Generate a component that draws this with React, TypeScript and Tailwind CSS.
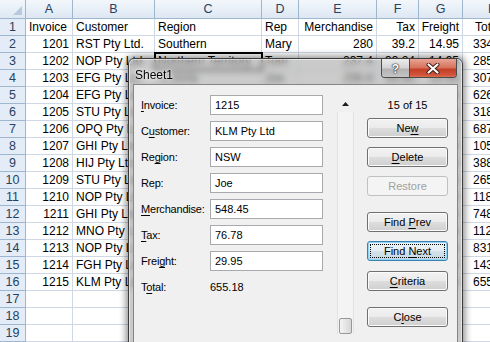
import React from "react";

const W = [
  "w-[26px]",
  "w-[47px]",
  "w-[82px]",
  "w-[107px]",
  "w-[37px]",
  "w-[78px]",
  "w-[42px]",
  "w-[44px]",
  "w-[60px]",
];
const LETTERS = ["", "A", "B", "C", "D", "E", "F", "G", "H"];

const DATA: string[][] = [
  ["Invoice", "Customer", "Region", "Rep", "Merchandise", "Tax", "Freight", "Total"],
  ["1201", "RST Pty Ltd.", "Southern", "Mary", "280", "39.2", "14.95", "334.15"],
  ["1202", "NOP Pty Ltd", "Northern Territory", "Tom", "237.4", "33.24", "14.95", "285.59"],
  ["1203", "EFG Pty Ltd", "Victoria", "Joe", "256.8", "35.95", "14.95", "307.70"],
  ["1204", "EFG Pty Ltd", "Victoria", "Joe", "536.3", "75.08", "29.95", "626.33"],
  ["1205", "STU Pty Ltd", "NSW", "Mary", "266.0", "37.24", "14.95", "318.19"],
  ["1206", "OPQ Pty Ltd", "Queensland", "Tom", "576.6", "80.72", "29.95", "687.27"],
  ["1207", "GHI Pty Ltd", "NSW", "Joe", "79.5", "11.13", "14.95", "105.58"],
  ["1208", "HIJ Pty Ltd", "Southern", "Mary", "327.7", "45.88", "14.95", "388.53"],
  ["1209", "STU Pty Ltd", "NSW", "Mary", "219.4", "30.72", "14.95", "265.07"],
  ["1210", "NOP Pty Ltd", "Queensland", "Tom", "90.8", "12.71", "14.95", "118.46"],
  ["1211", "GHI Pty Ltd", "NSW", "Joe", "630.1", "88.21", "29.95", "748.26"],
  ["1212", "MNO Pty Ltd", "Victoria", "Joe", "85.5", "11.97", "14.95", "112.42"],
  ["1213", "NOP Pty Ltd", "Queensland", "Tom", "703.2", "98.45", "29.95", "831.60"],
  ["1214", "FGH Pty Ltd", "Southern", "Mary", "112.6", "15.76", "14.95", "143.31"],
  ["1215", "KLM Pty Ltd", "NSW", "Joe", "548.45", "76.78", "29.95", "655.18"],
  ["", "", "", "", "", "", "", ""],
  ["", "", "", "", "", "", "", ""],
  ["", "", "", "", "", "", "", ""],
];

function alignFor(row: number, col: number): string {
  if (col === 1) return row === 0 ? "text-left pl-[3px]" : "text-right pr-[3px]";
  if (col === 8) return row === 0 ? "text-left pl-[12px]" : "text-left pl-[10px]";
  if (col >= 5) return "text-right pr-[3px]";
  return "text-left pl-[3px]";
}

function Sheet() {
  return (
    <div className="flex flex-col">
      {/* column headers */}
      <div className="flex h-[19px]">
        {LETTERS.map((l, i) => (
          <div
            key={i}
            className={`${W[i]} relative flex-none border-b border-r border-[#9eb6ce] bg-[linear-gradient(#f3f7fb,#dde7f3)] text-center text-[12.5px] leading-[18px] text-[#27415f]`}
          >
            {i === 0 ? (
              <svg className="absolute bottom-[3px] right-[3px]" width="9" height="9" viewBox="0 0 9 9">
                <path d="M9 0 L9 9 L0 9 Z" fill="#b8c9dd" />
              </svg>
            ) : (
              l
            )}
          </div>
        ))}
      </div>
      {DATA.map((row, r) => (
        <div key={r} className="flex h-[17px]">
          <div className="w-[26px] flex-none border-b border-r border-[#9eb6ce] bg-[#e4ecf7] text-center text-[12.5px] leading-[16px] text-[#27415f]">
            {r + 1}
          </div>
          {row.map((v, c) => (
            <div
              key={c}
              className={`${W[c + 1]} flex-none overflow-hidden whitespace-nowrap border-b border-r border-[#d0d7e5] text-[12px] leading-[16px] text-black ${alignFor(r, c + 1)}`}
            >
              {v}
            </div>
          ))}
        </div>
      ))}
    </div>
  );
}

function U({ children }: { children: React.ReactNode }) {
  return <span className="underline decoration-1 underline-offset-[2px]">{children}</span>;
}

function Field({ label, value }: { label: React.ReactNode; value?: string }) {
  return (
    <div className="flex h-[20px] items-center">
      <div className="w-[69px] flex-none text-[11px] leading-[14px] tracking-[-0.2px] text-black">{label}</div>
      {value !== undefined ? (
        <div className="h-[20px] w-[113px] flex-none border border-[#a7a9ad] bg-white pl-[4px] text-[11px] leading-[18px] text-black">
          {value}
        </div>
      ) : null}
    </div>
  );
}

function Btn({ children, top }: { children: React.ReactNode; top: string }) {
  return (
    <div
      className={`${top} h-[20px] w-[81px] rounded-[3px] border border-[#707070] bg-[linear-gradient(#f2f2f2_0%,#ebebeb_48%,#dddddd_52%,#cfcfcf_100%)] text-center text-[11px] leading-[18px] text-black shadow-[inset_0_0_0_1px_#fbfbfb]`}
    >
      {children}
    </div>
  );
}

function Dialog() {
  return (
    <div className="absolute left-[128px] top-[58px] h-[300px] w-[335px] rounded-t-[6px] border border-[#3c3c3c] bg-[rgba(165,165,165,0.58)] shadow-[0_0_7px_2px_rgba(0,0,0,0.45)] backdrop-blur-[3px]">
      <div className="pointer-events-none absolute inset-0 rounded-t-[5px] border border-[rgba(255,255,255,0.55)]" />
      {/* title bar */}
      <div className="relative flex h-[25px] items-start justify-between">
        <span className="ml-[6px] mt-[9px] text-[12px] leading-[14px] text-black [text-shadow:0_0_6px_#fff,0_0_3px_#fff]">
          Sheet1
        </span>
        <div className="mr-[5px] flex h-[19px] overflow-hidden rounded-b-[4px] border border-t-0 border-[#4a4a4a]">
          <div className="flex h-[19px] w-[28px] items-center justify-center border-r border-[#4a4a4a] bg-[linear-gradient(#ececec_0%,#d4d4d4_45%,#b4b4b4_55%,#c6c6c6_100%)]">
            <span className="text-[12px] font-bold leading-[12px] text-white [text-shadow:0_0_1px_#222,0_0_1px_#222,0_0_2px_#444]">
              ?
            </span>
          </div>
          <div className="flex h-[19px] w-[46px] items-center justify-center bg-[linear-gradient(#e8a597_0%,#d7725c_45%,#c43f28_55%,#d0553a_85%,#e08066_100%)]">
            <svg width="14" height="11" viewBox="0 0 14 11">
              <path d="M2.5 1.5 L11.5 9.5 M11.5 1.5 L2.5 9.5" stroke="#3a1a14" strokeWidth="4" strokeLinecap="round" />
              <path d="M2.5 1.5 L11.5 9.5 M11.5 1.5 L2.5 9.5" stroke="#ffffff" strokeWidth="2.2" strokeLinecap="round" />
            </svg>
          </div>
        </div>
      </div>
      {/* client area */}
      <div className="mx-[4px] flex h-[300px] border border-[#858585] bg-[#f0f0f0]">
        <div className="flex w-[189px] flex-none flex-col gap-[6px] pl-[7px] pt-[10px]">
          <Field label={<><U>I</U>nvoice:</>} value="1215" />
          <Field label={<>C<U>u</U>stomer:</>} value="KLM Pty Ltd" />
          <Field label={<>Re<U>g</U>ion:</>} value="NSW" />
          <Field label={<>Rep:</>} value="Joe" />
          <Field label={<><U>M</U>erchandise:</>} value="548.45" />
          <Field label={<><U>T</U>ax:</>} value="76.78" />
          <Field label={<>Frei<U>g</U>ht:</>} value="29.95" />
          <div className="flex h-[20px] items-center text-[11px] leading-[14px] text-black">
            <div className="w-[69px] flex-none tracking-[-0.2px]">
              T<U>o</U>tal:
            </div>
            <div>655.18</div>
          </div>
        </div>
        {/* scrollbar */}
        <div className="ml-[14px] mt-[10px] flex w-[17px] flex-none flex-col">
          <div className="flex h-[17px] items-center justify-center">
            <svg width="7" height="4" viewBox="0 0 7 4">
              <path d="M0 4 L3.5 0 L7 4 Z" fill="#1c1c1c" />
            </svg>
          </div>
          <div className="h-[206px] border-x border-[#e2e2e2] bg-[#f4f4f4]" />
          <div className="h-[16px] border-x border-[#e2e2e2] bg-[#f4f4f4] px-px">
            <div className="h-[16px] rounded-[2px] border border-[#989898] bg-[linear-gradient(90deg,#f4f4f4,#e6e6e6_50%,#d6d6d6)]" />
          </div>
          <div className="h-[17px]" />
        </div>
        {/* buttons */}
        <div className="ml-[13px] flex w-[81px] flex-none flex-col pt-[10px]">
          <div className="h-[20px] text-center text-[11px] leading-[20px] text-black">15 of 15</div>
          <Btn top="mt-[3px]">
            Ne<U>w</U>
          </Btn>
          <Btn top="mt-[9px]">
            <U>D</U>elete
          </Btn>
          <div className="mt-[9px] h-[20px] w-[81px] rounded-[3px] border border-[#bfc2c4] bg-[#f4f4f4] text-center text-[11px] leading-[18px] text-[#a0a0a0]">
            Restore
          </div>
          <Btn top="mt-[16px]">
            Find <U>P</U>rev
          </Btn>
          <div className="relative mt-[9px] h-[20px] w-[81px] rounded-[3px] border border-[#3c7fb1] bg-[linear-gradient(#eef4f8_0%,#e3edf3_48%,#d3e2eb_52%,#c6d9e4_100%)] text-center text-[11px] leading-[18px] text-black shadow-[inset_0_0_0_1px_#8fd3f4]">
            <span className="pointer-events-none absolute inset-[2px] border border-dotted border-black" />
            Find <U>N</U>ext
          </div>
          <Btn top="mt-[10px]">
            <U>C</U>riteria
          </Btn>
          <Btn top="mt-[16px]">
            C<U>l</U>ose
          </Btn>
        </div>
      </div>
    </div>
  );
}

export default function App() {
  return (
    <div className="relative h-[342px] w-[490px] overflow-hidden bg-white font-['Liberation_Sans',Arial,sans-serif]">
      <Sheet />
      {/* active cell C3 */}
      <div className="pointer-events-none absolute left-[154px] top-[52px] h-[19px] w-[109px] border-2 border-black" />
      <Dialog />
    </div>
  );
}
